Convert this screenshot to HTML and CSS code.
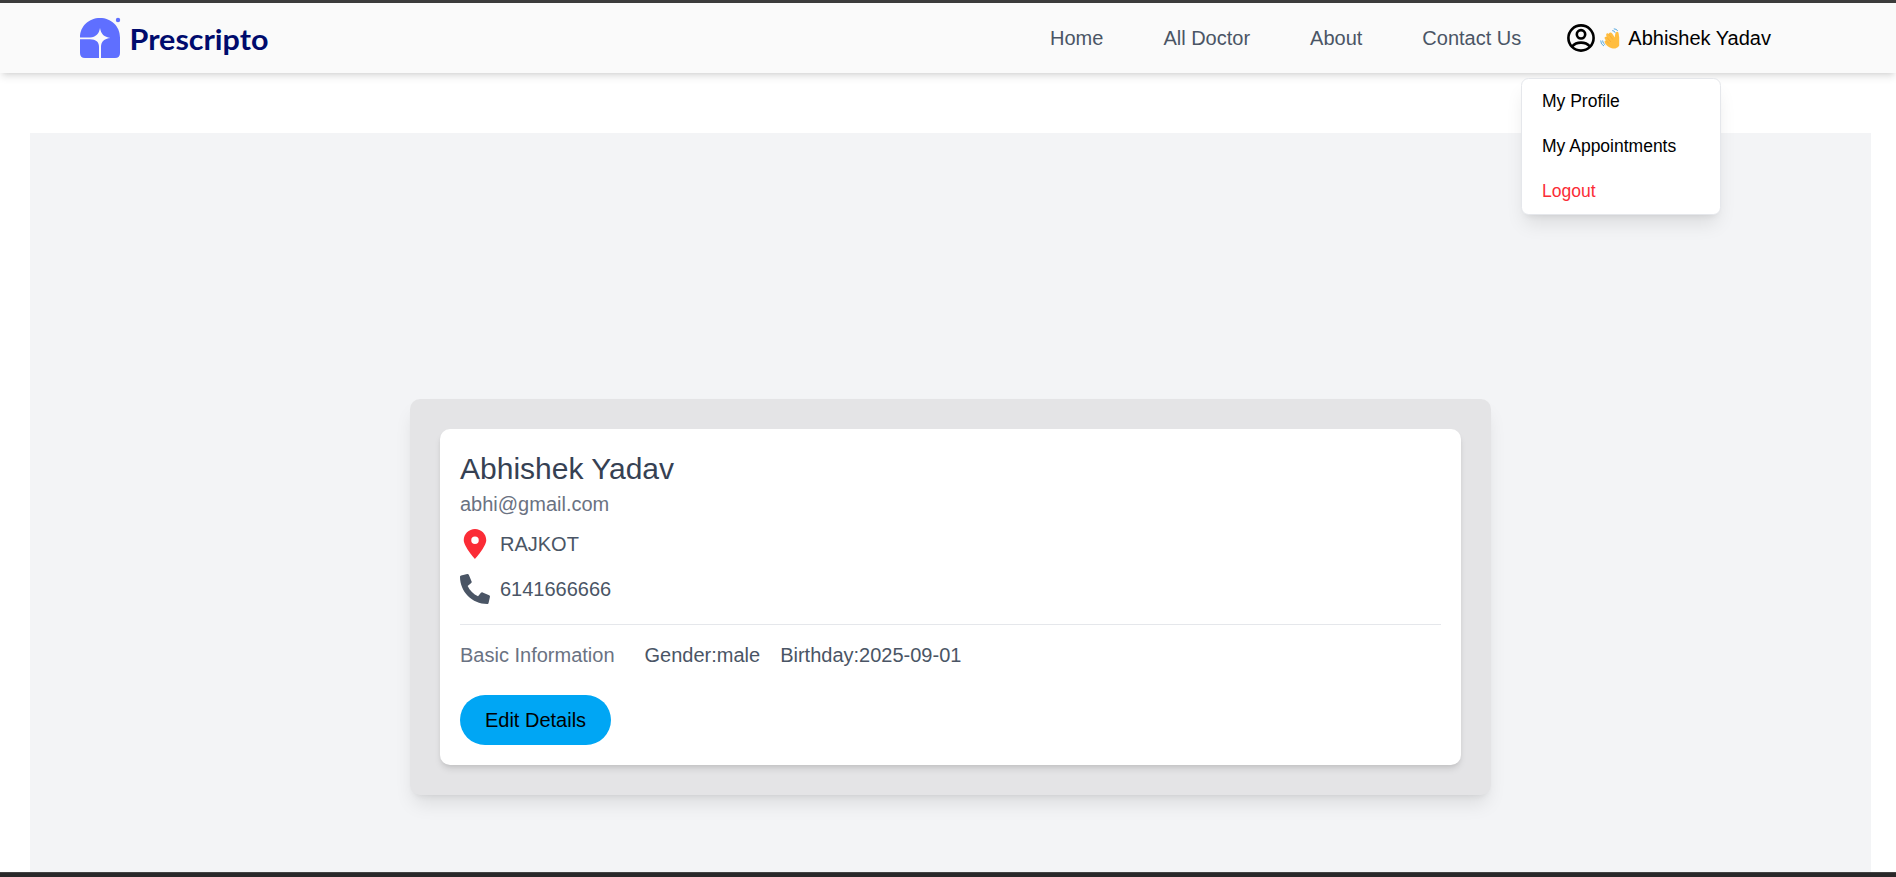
FILE: index.html
```html
<!DOCTYPE html>
<html lang="en">
<head>
<meta charset="utf-8">
<title>Prescripto</title>
<link rel="stylesheet" href="styles.css">
</head>
<body>
<div class="edge-top"></div>
<header class="header">
  <div class="brand">
    <svg class="brand-mark" viewBox="0 0 41 41">
      <path fill="#5f6fff" d="M0 19.500C0 8 9 0 20 0S40 8 40 19.500V35Q40 40 35 40H21V29C21 24 24 20.500 30.500 20C24 19 21 16 20 10C19 16 16 19 10 19.500ZM0 21.300H10C16 21.500 19 24 19 29V40H5Q0 40 0 35Z"/>
      <circle cx="38" cy="2" r="2.200" fill="#5f6fff"/>
    </svg>
    <svg class="brand-name" viewBox="0 0 138 44"><text x="-1.500" y="34" textLength="139" lengthAdjust="spacingAndGlyphs">Prescripto</text></svg>
  </div>
  <nav class="nav">
    <a>Home</a><a>All Doctor</a><a>About</a><a>Contact Us</a>
  </nav>
  <div class="account">
    <svg class="account-icon" viewBox="0 0 28 28" fill="none" stroke="#000" stroke-width="2.600">
      <circle cx="14" cy="14" r="12.600"/><circle cx="14" cy="10.300" r="4.200"/><path d="M5 22.500C9.500 17.300 18.500 17.300 23 22.500"/>
    </svg>
    <svg class="wave" viewBox="0 0 20 21">
      <path fill="#ffbd3f" d="M5.200 15.500C4 14 4.500 12.600 6 12.600L4.800 10.800C4 9.200 5.500 8.200 6.600 9L6.200 7.300C6 5.300 7.800 4.800 8.800 6L9 5.300C9.800 4 11.400 4.300 12.200 5.600L14.800 9.500C15 6 15.500 3.600 17.300 3.800 19 4 18.700 7 19.200 9V17.500C17.500 20.400 14.500 21 11.800 20.300 9 19.500 7 18 5.200 15.500Z"/>
      <path d="M6.300 12.800L9 15.600M6.800 9.300L10.800 13.900M8.900 6.300L12.700 11.400" fill="none" stroke="#f19a2b" stroke-width=".5"/>
      <path d="M12.200 2.600Q14.600 2.600 15.200 4.800M13.800 .800Q17.200 1 17.600 3M2.600 12.500Q2.700 15.500 5.200 16.800M.700 12.500Q.700 16.500 4 18" fill="none" stroke="#58a9df" stroke-width="1"/>
    </svg>
    <span>Abhishek Yadav</span>
    <div class="menu">
      <a>My Profile</a><a>My Appointments</a><a class="logout">Logout</a>
    </div>
  </div>
</header>
<main class="page">
  <section class="panel">
    <div class="card">
      <h1>Abhishek Yadav</h1>
      <p class="email">abhi@gmail.com</p>
      <div class="contact">
        <svg viewBox="0 0 24 24" fill="#fb2c36"><path d="M12 0C7 0 3 4 3 9C3 14 12 24 12 24S21 14 21 9C21 4 17 0 12 0ZM12 12A3 3 0 1 1 12 6A3 3 0 0 1 12 12Z"/></svg>
        <span>RAJKOT</span>
      </div>
      <div class="contact">
        <svg viewBox="0 0 512 512" fill="#4a5565"><path d="M493.400 24.600l-104-24c-11.300-2.600-22.900 3.300-27.500 13.900l-48 112c-4.200 9.800-1.400 21.300 6.900 28l60.600 49.600c-36 76.700-98.900 140.500-177.200 177.200l-49.600-60.600c-6.800-8.300-18.200-11.100-28-6.900l-112 48C3.900 366.500-2 378.100.600 389.400l24 104C27.100 504.200 36.700 512 48 512c256.100 0 464-207.500 464-464 0-11.200-7.700-20.900-18.600-23.400z" transform="matrix(-1 0 0 1 512 0)"/></svg>
        <span>6141666666</span>
      </div>
      <div class="basic">
        <span class="basic-title">Basic Information</span>
        <span class="gender">Gender:male</span>
        <span>Birthday:2025-09-01</span>
      </div>
      <button class="edit">Edit Details</button>
    </div>
  </section>
</main>
<div class="edge-bottom"></div>
</body>
</html>
```

FILE: styles.css
```css
* { box-sizing: border-box; }
body {
  margin: 0;
  height: 877px;
  display: flex;
  flex-direction: column;
  overflow: hidden;
  background: #fff;
  font: 20px/30px "Liberation Sans", Arial, sans-serif;
  color: #4a5565;
}
h1, p { margin: 0; }
.edge-top { flex: none; height: 3px; background: #3c3c3c; }
.edge-bottom { flex: none; height: 5px; background: #292829; border-top: 1px solid #434343; }
.header {
  flex: none;
  display: flex;
  align-items: center;
  height: 70px;
  padding: 0 125px 0 80px;
  background: #fafafa;
  box-shadow: 0 5px 7.500px -1px rgba(0, 0, 0, .1), 0 2.500px 5px -2.500px rgba(0, 0, 0, .1);
}
.brand { display: flex; align-items: center; gap: 10px; margin-right: auto; }
.brand-mark { width: 41px; height: 41px; overflow: visible; }
.brand-name { width: 138px; height: 44px; overflow: visible; }
.brand-name text { font: 700 29px Lato, sans-serif; fill: #000b6d; }
.nav { display: flex; gap: 60px; margin-right: 46px; }
.account { position: relative; display: flex; align-items: center; color: #000; }
.account-icon { width: 28px; height: 28px; }
.wave { width: 20px; height: 21px; margin: 0 8px 0 5px; }
.menu {
  position: absolute;
  z-index: 2;
  top: 55px;
  right: 50px;
  width: 200px;
  display: flex;
  flex-direction: column;
  overflow: hidden;
  background: #fff;
  border: 1px solid #e5e7eb;
  border-radius: 7.500px;
  box-shadow: 0 12px 19px -4px rgba(0, 0, 0, .1), 0 5px 7.500px -5px rgba(0, 0, 0, .1);
  font-size: 17.500px;
  line-height: 25px;
}
.menu a { padding: 10px 20px; }
.menu .logout { color: #fb2c36; }
.page {
  flex: 1;
  min-height: 0;
  margin: 60px 25px 0 30px;
  padding-top: 266px;
  background: #f3f4f6;
}
.panel {
  width: 1081px;
  height: 396px;
  margin: 0 auto;
  padding: 30px;
  background: #e4e4e6;
  border-radius: 10px;
  box-shadow: 0 12px 19px -4px rgba(0, 0, 0, .1), 0 5px 7.500px -5px rgba(0, 0, 0, .1);
}
.card {
  height: 336px;
  padding: 20px;
  background: #fff;
  border-radius: 10px;
  box-shadow: 0 5px 7.500px -1px rgba(0, 0, 0, .1), 0 2.500px 5px -2.500px rgba(0, 0, 0, .1);
}
h1 { font-size: 30px; line-height: 40px; font-weight: 400; color: #364153; }
.email { color: #6a7282; }
.contact { display: flex; align-items: center; gap: 10px; height: 30px; margin-top: 10px; }
.contact + .contact { margin-top: 15px; }
.contact svg { width: 30px; height: 30px; }
.basic {
  display: flex;
  margin-top: 20px;
  padding-top: 15px;
  border-top: 1px solid #e5e7eb;
}
.basic-title { color: #6a7282; margin-right: 30px; }
.gender { margin-right: 20px; }
.edit {
  display: block;
  width: 151px;
  height: 50px;
  margin-top: 25px;
  padding: 0;
  border: 0;
  border-radius: 25px;
  background: #00a6f4;
  color: #000;
  font: inherit;
}
```
